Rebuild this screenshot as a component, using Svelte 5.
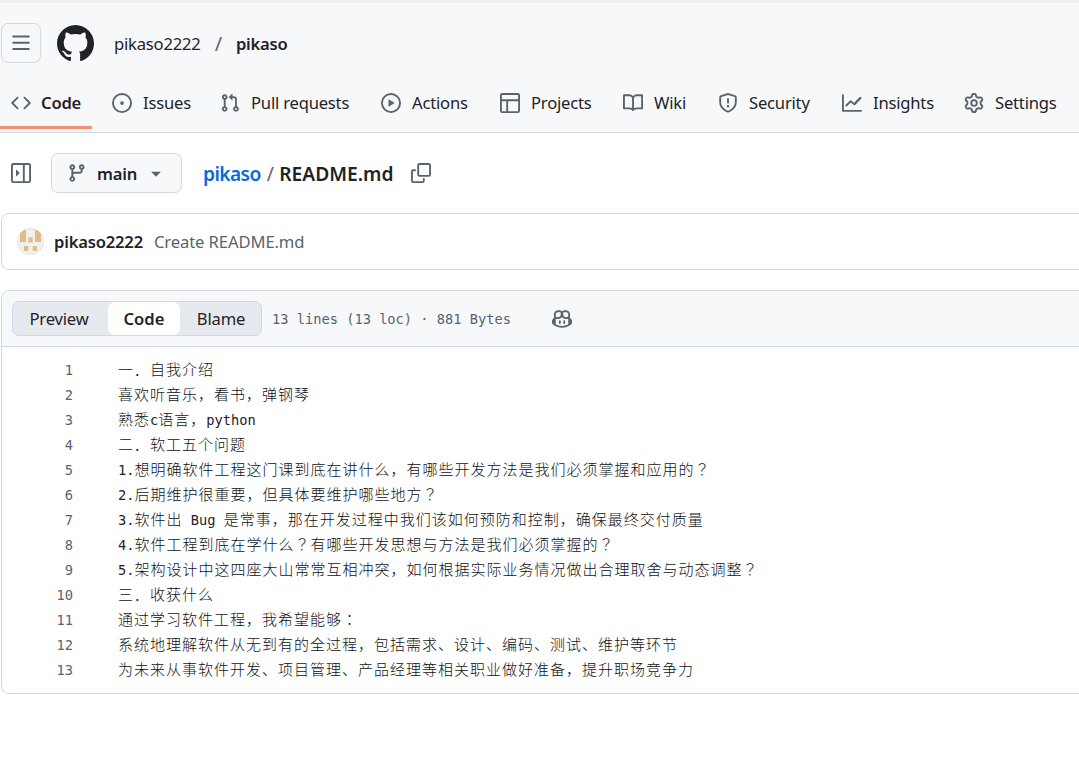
<script>
  const icons = {
    code: "M11.28 3.22l4.25 4.25a.75.75 0 010 1.06l-4.25 4.25a.749.749 0 01-1.275-.326.749.749 0 01.215-.734L13.94 8l-3.72-3.72a.749.749 0 01.326-1.275.749.749 0 01.734.215zm-6.56 0a.751.751 0 011.042.018.751.751 0 01.018 1.042L2.06 8l3.72 3.72a.749.749 0 01-.326 1.275.749.749 0 01-.734-.215L.47 8.53a.75.75 0 010-1.06z",
    issue: "M8 9.5a1.5 1.5 0 100-3 1.5 1.5 0 000 3zM8 0a8 8 0 110 16A8 8 0 018 0zM1.5 8a6.5 6.5 0 1013 0 6.5 6.5 0 00-13 0z",
    pr: "M1.5 3.25a2.25 2.25 0 113 2.122v5.256a2.251 2.251 0 11-1.5 0V5.372A2.25 2.25 0 011.5 3.25zm5.677-.177L9.573.677A.25.25 0 0110 .854V2.5h1A2.5 2.5 0 0113.5 5v5.628a2.251 2.251 0 11-1.5 0V5a1 1 0 00-1-1h-1v1.646a.25.25 0 01-.427.177L7.177 3.427a.25.25 0 010-.354zM3.75 2.5a.75.75 0 100 1.5.75.75 0 000-1.5zm0 9.5a.75.75 0 100 1.5.75.75 0 000-1.5zm8.25.75a.75.75 0 101.5 0 .75.75 0 00-1.5 0z",
    play: "M8 0a8 8 0 110 16A8 8 0 018 0zM1.5 8a6.5 6.5 0 1013 0 6.5 6.5 0 00-13 0zm4.879-2.773l4.264 2.559a.25.25 0 010 .428l-4.264 2.559A.25.25 0 016 10.559V5.442a.25.25 0 01.379-.215z",
    table: "M0 1.75C0 .784.784 0 1.75 0h12.5C15.216 0 16 .784 16 1.75v12.5A1.75 1.75 0 0114.25 16H1.75A1.75 1.75 0 010 14.25zM6.5 6.5v8h7.75a.25.25 0 00.25-.25V6.5zm8-1.5V1.75a.25.25 0 00-.25-.25H1.75a.25.25 0 00-.25.25V5zM5 6.5H1.5v7.75c0 .138.112.25.25.25H5z",
    book: "M0 1.75A.75.75 0 01.75 1h4.253c1.227 0 2.317.59 3 1.501A3.743 3.743 0 0111.006 1h4.245a.75.75 0 01.75.75v10.5a.75.75 0 01-.75.75h-4.507a2.25 2.25 0 00-1.591.659l-.622.621a.75.75 0 01-1.06 0l-.622-.621A2.25 2.25 0 005.258 13H.75a.75.75 0 01-.75-.75zm7.251 10.324l.004-5.073-.002-2.253A2.25 2.25 0 005.003 2.5H1.5v9h3.757a3.75 3.75 0 011.994.574zM8.755 4.75l-.004 7.322a3.752 3.752 0 011.992-.572H14.5v-9h-3.495a2.25 2.25 0 00-2.25 2.25z",
    shield: "M7.467.133a1.748 1.748 0 011.066 0l5.25 1.68A1.75 1.75 0 0115 3.48V7c0 1.566-.32 3.182-1.303 4.682-.983 1.498-2.585 2.813-5.032 3.855a1.697 1.697 0 01-1.33 0c-2.447-1.042-4.049-2.357-5.032-3.855C1.32 10.182 1 8.566 1 7V3.48a1.75 1.75 0 011.217-1.667zm.61 1.429a.25.25 0 00-.153 0l-5.25 1.68a.25.25 0 00-.174.238V7c0 1.358.275 2.666 1.057 3.86.784 1.194 2.121 2.34 4.366 3.297a.196.196 0 00.154 0c2.245-.956 3.582-2.104 4.366-3.298C13.225 9.666 13.5 8.36 13.5 7V3.48a.251.251 0 00-.174-.237l-5.25-1.68zM8.75 4.75v3a.75.75 0 01-1.5 0v-3a.75.75 0 011.5 0zM9 10.5a1 1 0 11-2 0 1 1 0 012 0z",
    graph: "M1.5 1.75V13.5h13.75a.75.75 0 010 1.5H.75a.75.75 0 01-.75-.75V1.75a.75.75 0 011.5 0zm14.28 2.53l-5.25 5.25a.75.75 0 01-1.06 0L7 7.56l-2.97 2.97a.749.749 0 01-1.275-.326.749.749 0 01.215-.734l3.5-3.5a.75.75 0 011.06 0L9.5 7.94l4.72-4.72a.751.751 0 011.042.018.751.751 0 01.018 1.042z",
    gear: "M8 0a8.2 8.2 0 01.701.031C9.444.095 9.99.645 10.16 1.29l.288 1.107c.018.066.079.158.212.224.231.114.454.243.668.386.123.082.233.09.299.071l1.103-.303c.644-.176 1.392.021 1.82.63.27.385.506.792.704 1.218.315.675.111 1.422-.364 1.891l-.814.806c-.049.048-.098.147-.088.294.016.257.016.515 0 .772-.01.147.038.246.088.294l.814.806c.475.469.679 1.216.364 1.891a7.977 7.977 0 01-.704 1.217c-.428.61-1.176.807-1.82.63l-1.102-.302c-.067-.019-.177-.011-.3.071a5.909 5.909 0 01-.668.386c-.133.066-.194.158-.211.224l-.29 1.106c-.168.646-.715 1.196-1.458 1.26a8.006 8.006 0 01-1.402 0c-.743-.064-1.289-.614-1.458-1.26l-.289-1.106c-.018-.066-.079-.158-.212-.224a5.738 5.738 0 01-.668-.386c-.123-.082-.233-.09-.299-.071l-1.103.303c-.644.176-1.392-.021-1.82-.63a8.12 8.12 0 01-.704-1.218c-.315-.675-.111-1.422.363-1.891l.815-.806c.05-.048.098-.147.088-.294a6.214 6.214 0 010-.772c.01-.147-.038-.246-.088-.294l-.815-.806C.635 6.045.431 5.298.746 4.623a7.92 7.92 0 01.704-1.217c.428-.61 1.176-.807 1.82-.63l1.102.302c.067.019.177.011.3-.071.214-.143.437-.272.668-.386.133-.066.194-.158.211-.224l.29-1.106C6.009.645 6.556.095 7.299.03 7.53.01 7.764 0 8 0zm-.571 1.525c-.036.003-.108.036-.137.146l-.289 1.105c-.147.561-.549.967-.998 1.189-.173.086-.34.183-.5.29-.417.278-.97.423-1.529.27l-1.103-.303c-.109-.03-.175.016-.195.045-.22.312-.412.644-.573.99-.014.031-.021.11.059.19l.815.806c.411.406.562.957.53 1.456a4.709 4.709 0 000 .582c.032.499-.119 1.05-.53 1.456l-.815.806c-.081.08-.073.159-.059.19.162.346.353.677.573.989.02.03.085.076.195.046l1.102-.303c.56-.153 1.113-.008 1.53.27.161.107.328.204.501.29.447.222.85.629.997 1.189l.289 1.105c.029.109.101.143.137.146a6.6 6.6 0 001.142 0c.036-.003.108-.036.137-.146l.289-1.105c.147-.561.549-.967.998-1.189.173-.086.34-.183.5-.29.417-.278.97-.423 1.529-.27l1.103.303c.109.029.175-.016.195-.045.22-.313.411-.644.573-.99.014-.031.021-.11-.059-.19l-.815-.806c-.411-.406-.562-.957-.53-1.456a4.709 4.709 0 000-.582c-.032-.499.119-1.05.53-1.456l.815-.806c.081-.08.073-.159.059-.19a6.464 6.464 0 00-.573-.989c-.02-.03-.085-.076-.195-.046l-1.102.303c-.56.153-1.113.008-1.53-.27a4.44 4.44 0 00-.501-.29c-.447-.222-.85-.629-.997-1.189l-.289-1.105c-.029-.11-.101-.143-.137-.146a6.6 6.6 0 00-1.142 0zM11 8a3 3 0 11-6 0 3 3 0 016 0zM9.5 8a1.5 1.5 0 10-3.001.001A1.5 1.5 0 009.5 8z",
    github: "M8 0c4.42 0 8 3.58 8 8a8.013 8.013 0 01-5.45 7.59c-.4.08-.55-.17-.55-.38 0-.27.01-1.13.01-2.2 0-.75-.25-1.23-.54-1.48 1.78-.2 3.65-.88 3.65-3.95 0-.88-.31-1.59-.82-2.15.08-.2.36-1.02-.08-2.12 0 0-.67-.22-2.2.82-.64-.18-1.32-.27-2-.27-.68 0-1.36.09-2 .27-1.53-1.03-2.2-.82-2.2-.82-.44 1.1-.16 1.92-.08 2.12-.51.56-.82 1.28-.82 2.15 0 3.06 1.86 3.75 3.64 3.95-.23.2-.44.55-.51 1.07-.46.21-1.61.55-2.33-.66-.15-.24-.6-.83-1.23-.82-.67.01-.27.38.01.53.34.19.73.9.82 1.13.16.45.68 1.31 2.69.94 0 .67.01 1.3.01 1.49 0 .21-.15.45-.55.38A7.995 7.995 0 010 8c0-4.42 3.58-8 8-8z",
    bars: "M1 2.75A.75.75 0 011.75 2h12.5a.75.75 0 010 1.5H1.75A.75.75 0 011 2.75zm0 5A.75.75 0 011.75 7h12.5a.75.75 0 010 1.5H1.75A.75.75 0 011 7.75zM1.75 12h12.5a.75.75 0 010 1.5H1.75a.75.75 0 010-1.5z",
    sidebar: "M6.823 7.823a.25.25 0 010 .354l-2.396 2.396A.25.25 0 014 10.396V5.604a.25.25 0 01.427-.177zM1.75 0h12.5C15.216 0 16 .784 16 1.75v12.5A1.75 1.75 0 0114.25 16H1.75A1.75 1.75 0 010 14.25V1.75C0 .784.784 0 1.75 0zM1.5 1.75v12.5c0 .138.112.25.25.25H9.5v-13H1.75a.25.25 0 00-.25.25zM11 14.5h3.25a.25.25 0 00.25-.25V1.75a.25.25 0 00-.25-.25H11z",
    branch: "M9.5 3.25a2.25 2.25 0 113 2.122V6A2.5 2.5 0 0110 8.5H6a1 1 0 00-1 1v1.128a2.251 2.251 0 11-1.5 0V5.372a2.25 2.25 0 111.5 0v1.836A2.493 2.493 0 016 7h4a1 1 0 001-1v-.628A2.25 2.25 0 019.5 3.25zm-6 0a.75.75 0 101.5 0 .75.75 0 00-1.5 0zm8.25-.75a.75.75 0 100 1.5.75.75 0 000-1.5zM4.25 12a.75.75 0 100 1.5.75.75 0 000-1.5z",
    caret: "m4.427 7.427 3.396 3.396a.25.25 0 00.354 0l3.396-3.396A.25.25 0 0011.396 7H4.604a.25.25 0 00-.177.427z",
    copy: "M0 6.75C0 5.784.784 5 1.75 5h1.5a.75.75 0 010 1.5h-1.5a.25.25 0 00-.25.25v7.5c0 .138.112.25.25.25h7.5a.25.25 0 00.25-.25v-1.5a.75.75 0 011.5 0v1.5A1.75 1.75 0 019.25 16h-7.5A1.75 1.75 0 010 14.25zM5 1.75C5 .784 5.784 0 6.75 0h7.5C15.216 0 16 .784 16 1.75v7.5A1.75 1.75 0 0114.25 11h-7.5A1.75 1.75 0 015 9.25zm1.75-.25a.25.25 0 00-.25.25v7.5c0 .138.112.25.25.25h7.5a.25.25 0 00.25-.25v-7.5a.25.25 0 00-.25-.25z",
    copilot: "M7.998 15.035c-4.562 0-7.873-2.914-7.998-3.749V9.338c.085-.628.677-1.686 1.588-2.065.013-.07.024-.143.036-.218.029-.183.06-.384.126-.612-.201-.508-.254-1.084-.254-1.656 0-.87.128-1.769.693-2.484.579-.733 1.494-1.124 2.724-1.261 1.206-.134 2.262.034 2.944.765.05.053.096.108.139.165.044-.057.094-.112.143-.165.682-.731 1.738-.899 2.944-.765 1.23.137 2.145.528 2.724 1.261.566.715.693 1.614.693 2.484 0 .572-.053 1.148-.254 1.656.066.228.098.429.126.612.012.076.024.148.037.218.924.385 1.522 1.471 1.591 2.095v1.872c0 .766-3.351 3.795-8.002 3.795zm0-1.485c2.28 0 4.584-1.11 5.002-1.433V7.862l-.023-.116c-.49.21-1.075.291-1.727.291-1.146 0-2.059-.327-2.71-.991A3.222 3.222 0 018 6.303a3.24 3.24 0 01-.544.743c-.65.664-1.563.991-2.71.991-.652 0-1.236-.081-1.727-.291l-.023.116v4.255c.419.323 2.722 1.433 5.002 1.433zM6.762 2.83c-.193-.206-.637-.413-1.682-.297-1.019.113-1.479.404-1.713.7-.247.312-.369.789-.369 1.554 0 .793.129 1.171.308 1.371.162.181.519.379 1.442.379.853 0 1.339-.235 1.638-.54.315-.322.527-.827.617-1.553.117-.935-.037-1.395-.241-1.614zm4.155-.297c-1.044-.116-1.488.091-1.681.297-.204.219-.359.679-.242 1.614.091.726.303 1.231.618 1.553.299.305.784.54 1.638.54.922 0 1.28-.198 1.442-.379.179-.2.308-.578.308-1.371 0-.765-.123-1.242-.37-1.554-.233-.296-.693-.587-1.713-.7zM6.25 9.037a.75.75 0 01.75.75v1.501a.75.75 0 01-1.5 0V9.787a.75.75 0 01.75-.75zm4.25.75v1.501a.75.75 0 01-1.5 0V9.787a.75.75 0 011.5 0z"
  };

  const tabs = [
    { label: "Code", icon: "code", width: 92, active: true },
    { label: "Issues", icon: "issue", width: 99 },
    { label: "Pull requests", icon: "pr", width: 152 },
    { label: "Actions", icon: "play", width: 110 },
    { label: "Projects", icon: "table", width: 114 },
    { label: "Wiki", icon: "book", width: 86 },
    { label: "Security", icon: "shield", width: 115 },
    { label: "Insights", icon: "graph", width: 113 },
    { label: "Settings", icon: "gear", width: 104 }
  ];

  const lines = [
    "一．自我介绍",
    "喜欢听音乐，看书，弹钢琴",
    "熟悉c语言，python",
    "二．软工五个问题",
    "1.想明确软件工程这门课到底在讲什么，有哪些开发方法是我们必须掌握和应用的？",
    "2.后期维护很重要，但具体要维护哪些地方？",
    "3.软件出 Bug 是常事，那在开发过程中我们该如何预防和控制，确保最终交付质量",
    "4.软件工程到底在学什么？有哪些开发思想与方法是我们必须掌握的？",
    "5.架构设计中这四座大山常常互相冲突，如何根据实际业务情况做出合理取舍与动态调整？",
    "三．收获什么",
    "通过学习软件工程，我希望能够：",
    "系统地理解软件从无到有的全过程，包括需求、设计、编码、测试、维护等环节",
    "为未来从事软件开发、项目管理、产品经理等相关职业做好准备，提升职场竞争力"
  ];

  // latin, cjk and centred punctuation get different fonts in the code view
  const runs = (line) => line.match(/[\x20-\x7e]+|[？：]|[^\x20-\x7e？：]+/g);
  const runClass = (run) => (/^[\x20-\x7e]/.test(run) ? "latin" : /^[？：]/.test(run) ? "cjk punct" : "cjk");
</script>

{#snippet icon(name, size = 20)}
  <svg class="icon" width={size} height={size} viewBox="0 0 16 16" fill="currentColor" aria-hidden="true">
    <path fill-rule="evenodd" d={icons[name]} />
  </svg>
{/snippet}

<div class="page">
  <header class="header">
    <div class="topbar">
      <button class="menu">{@render icon("bars")}</button>
      <span class="logo">{@render icon("github", 37)}</span>
      <span class="owner">pikaso2222</span>
      <span class="slash">/</span>
      <strong class="repo">pikaso</strong>
    </div>
    <nav class="tabs">
      {#each tabs as tab}
        <a class="tab" class:active={tab.active} href="#top" style="width: {tab.width}px">
          {@render icon(tab.icon)}
          <span>{tab.label}</span>
        </a>
      {/each}
    </nav>
  </header>

  <main class="main">
    <div class="pathbar">
      <span class="side">{@render icon("sidebar")}</span>
      <button class="branch">
        <span class="muted">{@render icon("branch")}</span>
        <span class="branch-name">main</span>
        <span class="muted">{@render icon("caret")}</span>
      </button>
      <div class="crumbs">
        <a href="#top">pikaso</a>
        <span class="sep">/</span>
        <strong>README.md</strong>
      </div>
      <span class="copy">{@render icon("copy")}</span>
    </div>

    <div class="commit">
      <svg class="avatar" width="27" height="27" viewBox="0 0 27 27" aria-hidden="true">
        <defs><clipPath id="round"><circle cx="13.5" cy="13.5" r="13" /></clipPath></defs>
        <circle cx="13.5" cy="13.5" r="13" fill="#f0f0f0" stroke="#e2e4e6" />
        <g fill="#dfbe85" clip-path="url(#round)">
          <rect x="3" y="2" width="6" height="12" />
          <rect x="18" y="2" width="6" height="12" />
          <rect x="11.3" y="9.5" width="4.4" height="5" />
          <rect x="7" y="18" width="4.3" height="5" />
          <rect x="15.7" y="18" width="4.3" height="5" />
        </g>
      </svg>
      <strong class="author">pikaso2222</strong>
      <span class="message">Create README.md</span>
    </div>

    <section class="file">
      <div class="file-head">
        <div class="segments">
          <span class="seg preview">Preview</span>
          <span class="seg current">Code</span>
          <span class="seg blame">Blame</span>
        </div>
        <span class="meta">13 lines (13 loc) · 881 Bytes</span>
        <span class="copilot">{@render icon("copilot")}</span>
      </div>
      <div class="code">
        {#each lines as line, i}
          <div class="line">
            <span class="num">{i + 1}</span>
            <span class="text">
              {#each runs(line) as run}<span class={runClass(run)}>{run}</span>{/each}
            </span>
          </div>
        {/each}
      </div>
    </section>
  </main>
</div>

<style>
  :global(body) {
    background: #fff;
    color: #1f2328;
    font-family: "Noto Sans", "Noto Sans CJK SC", sans-serif;
    font-size: 16.6px;
    letter-spacing: -0.2px;
    overflow: hidden;
  }
  .page {
    width: 1079px;
    height: 764px;
    overflow: hidden;
  }
  .icon {
    display: block;
    flex-shrink: 0;
  }
  .header {
    background: #f6f8fa;
    border-top: 3px solid #eff0f1;
    border-bottom: 1px solid #d1d9e0;
    height: 129px;
  }
  .topbar {
    display: flex;
    align-items: center;
    height: 40px;
    margin-top: 20px;
    padding-left: 1px;
  }
  .menu {
    width: 40px;
    height: 40px;
    display: flex;
    align-items: center;
    justify-content: center;
    background: #f6f8fa;
    border: 1px solid #d1d9e0;
    border-radius: 7px;
    color: #59636e;
    padding: 0;
  }
  .logo {
    margin-left: 16px;
    margin-right: 20px;
    color: #1f2328;
  }
  .slash {
    font-size: 20px;
    color: #59636e;
    margin: 0 14px;
  }
  .repo {
    font-weight: 600;
  }
  .tabs {
    display: flex;
    margin-top: 13px;
    height: 53px;
  }
  .tab {
    display: flex;
    align-items: center;
    gap: 11px;
    box-sizing: content-box;
    height: 47px;
    padding: 3px 0 0;
    margin-right: 9px;
    color: #1f2328;
    text-decoration: none;
    white-space: nowrap;
    border-bottom: 3px solid transparent;
    flex-shrink: 0;
  }
  .tab .icon {
    margin-left: 11px;
    color: #59636e;
  }
  .tab.active {
    gap: 10px;
    font-weight: 600;
    border-bottom-color: #fd8c73;
  }
  .main {
    padding-left: 1px;
  }
  .pathbar {
    display: flex;
    align-items: center;
    height: 40px;
    margin-top: 20px;
    padding-left: 10px;
  }
  .side {
    color: #59636e;
    margin-right: 20px;
  }
  .muted {
    color: #59636e;
  }
  .branch {
    display: flex;
    align-items: center;
    height: 40px;
    width: 131px;
    padding: 0 0 0 15px;
    background: #f6f8fa;
    border: 1px solid #d1d9e0;
    border-radius: 7px;
    color: #1f2328;
    font: inherit;
    letter-spacing: inherit;
  }
  .branch-name {
    font-weight: 600;
    margin: 0 9px 0 10px;
  }
  .crumbs {
    display: flex;
    align-items: center;
    gap: 6px;
    margin-left: 21px;
    font-size: 19.2px;
    letter-spacing: -0.6px;
  }
  .crumbs a {
    color: #0969da;
    font-weight: 600;
    text-decoration: none;
  }
  .crumbs .sep {
    color: #59636e;
  }
  .crumbs strong {
    font-weight: 600;
    letter-spacing: 0;
  }
  .copy {
    color: #59636e;
    margin-left: 18px;
  }
  .commit {
    display: flex;
    align-items: center;
    height: 55px;
    width: 1100px;
    margin-top: 20px;
    padding-left: 15px;
    border: 1px solid #d1d9e0;
    border-radius: 8px;
  }
  .author {
    margin-left: 10px;
    font-weight: 600;
  }
  .message {
    margin-left: 11px;
    letter-spacing: -0.1px;
    color: #59636e;
  }
  .file {
    width: 1100px;
    height: 402px;
    margin-top: 20px;
    border: 1px solid #d1d9e0;
    border-radius: 8px;
    overflow: hidden;
  }
  .file-head {
    display: flex;
    align-items: center;
    height: 55px;
    padding-left: 10px;
    background: #f6f8fa;
    border-bottom: 1px solid #d1d9e0;
  }
  .segments {
    display: flex;
    align-items: center;
    width: 250px;
    height: 35px;
    box-sizing: border-box;
    background: #e6eaef;
    border: 1px solid #d1d9e0;
    border-radius: 7px;
  }
  .seg {
    display: flex;
    align-items: center;
    justify-content: center;
    height: 33px;
    box-sizing: border-box;
  }
  .preview {
    width: 95px;
    padding-right: 3px;
  }
  .current {
    width: 72px;
    background: #fff;
    border-radius: 7px;
    font-weight: 600;
    letter-spacing: 0;
  }
  .blame {
    width: 81px;
    padding-left: 1px;
  }
  .meta {
    margin-left: 10px;
    font-family: "DejaVu Sans Mono", monospace;
    font-size: 13.7px;
    letter-spacing: 0;
    color: #59636e;
  }
  .copilot {
    margin-left: 41px;
    color: #59636e;
  }
  .code {
    padding-top: 10px;
    font-family: "DejaVu Sans Mono", "Noto Sans CJK SC", monospace;
    letter-spacing: 0;
  }
  .line {
    display: flex;
    height: 25px;
    line-height: 25px;
    white-space: pre;
  }
  .num {
    width: 71px;
    text-align: right;
    font-size: 13.7px;
    color: #59636e;
    line-height: 26px;
  }
  .text {
    margin-left: 45px;
    margin-top: -1px;
  }
  .latin {
    font-size: 13.7px;
  }
  .cjk {
    font-family: "Noto Sans CJK SC", sans-serif;
    font-size: 15px;
    font-weight: 300;
    letter-spacing: 1px;
    color: #0f1216;
  }
  .punct {
    font-family: "Noto Sans CJK JP", sans-serif;
  }
</style>
